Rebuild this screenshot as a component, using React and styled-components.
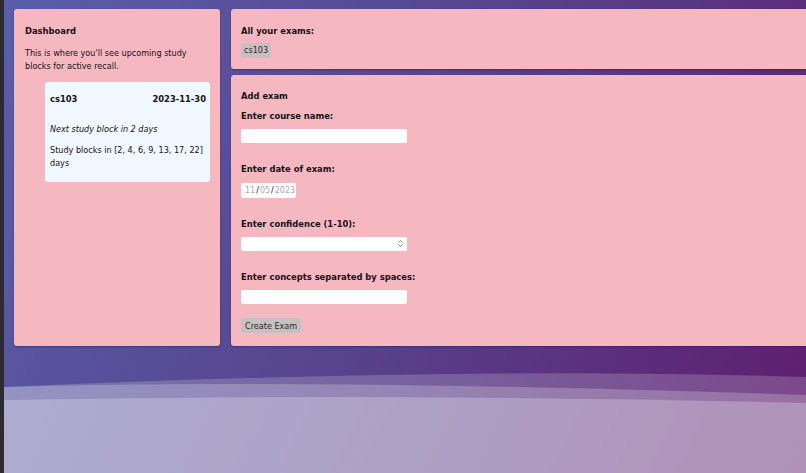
import styled, { createGlobalStyle } from "styled-components";
import { ChevronsUpDown } from "lucide-react";

const GlobalStyle = createGlobalStyle`
  html, body {
    margin: 0;
    padding: 0;
    height: 100%;
    overflow: hidden;
  }
  body {
    font-family: "DejaVu Sans", "Noto Sans", sans-serif;
    font-size: 8.1px;
    color: #161216;
    background: #2c2b31;
  }
`;

const Screen = styled.div`
  display: flex;
  height: 473px;
`;

const Strip = styled.div`
  width: 4px;
  flex-shrink: 0;
  background: #2c2b31;
`;

const Stage = styled.div`
  position: relative;
  flex: 1;
  overflow: hidden;
  background: linear-gradient(115deg, #5a5ea8 0%, #574690 45%, #5e1d6c 100%);
`;

const Waves = styled.svg`
  position: absolute;
  left: 0;
  bottom: 0;
  width: 100%;
  height: 103px;
`;

const Layout = styled.div`
  position: relative;
  display: grid;
  grid-template-columns: 206px 600px;
  gap: 11px;
  padding: 9px 0 0 10px;
  align-items: start;
`;

const Panel = styled.section`
  background: #f5b8c1;
  border-radius: 3px;
  box-shadow: 0 1px 2px rgba(30, 10, 50, 0.35);
  padding: ${(p) => p.$pad || "15px 11px 11px 10px"};
  box-sizing: border-box;
  height: ${(p) => p.$h || "auto"};
`;

const Column = styled.div`
  display: flex;
  flex-direction: column;
  gap: 6px;
`;

const Title = styled.h2`
  margin: 0;
  font-size: 8.4px;
  font-weight: 700;
  line-height: 13px;
`;

const Text = styled.p`
  margin: ${(p) => p.$mt || "0"} 0 0;
  line-height: 13px;
  font-style: ${(p) => (p.$italic ? "italic" : "normal")};
`;

const Card = styled.div`
  margin: 9.5px -1px 0 20px;
  background: #f0f7fe;
  border-radius: 3px;
  padding: 11px 4px 11.5px 5px;
`;

const CardHead = styled.div`
  display: flex;
  justify-content: space-between;
  font-size: 8.4px;
  font-weight: 700;
  line-height: 13px;
`;

const Chip = styled.span`
  display: inline-block;
  margin-top: 5.5px;
  background: #c7bfc2;
  color: #2a2a2a;
  border-radius: 2px;
  padding: 0 3px;
  line-height: 15px;
`;

const Label = styled.label`
  display: block;
  font-size: 8.4px;
  font-weight: 700;
  line-height: 13px;
  margin-top: ${(p) => p.$mt || "20px"};
`;

const Field = styled.div`
  position: relative;
  margin-top: 6.5px;
  width: ${(p) => p.$w || "166px"};
`;

const Input = styled.input`
  display: block;
  width: 100%;
  height: 14px;
  box-sizing: border-box;
  border: none;
  border-radius: 2px;
  background: #fff;
  padding: 0 4px;
  font: inherit;
  outline: none;
`;

const DateBox = styled.div`
  display: flex;
  align-items: center;
  height: 15px;
  width: 55px;
  box-sizing: border-box;
  padding: 0 4px;
  background: #fff;
  border-radius: 2px;
  color: #a9a9a9;
  font-size: 8px;
`;

const Slash = styled.span`
  color: #111;
  margin: 0 1px;
`;

const Spinner = styled.span`
  position: absolute;
  right: 2px;
  top: 2px;
  display: flex;
  color: #666;
`;

const Button = styled.button`
  display: block;
  margin-top: 14px;
  height: 15px;
  padding: 0 4px;
  border: none;
  border-radius: 3px;
  background: #c7c0c2;
  color: #2a2a2a;
  font: inherit;
`;

export default function App() {
  return (
    <>
      <GlobalStyle />
      <Screen>
        <Strip />
        <Stage>
          <Waves viewBox="4 370 802 103" preserveAspectRatio="none">
            <path d="M4 387 Q480 366 806 377 L806 473 L4 473 Z" fill="#fff" fillOpacity="0.19" />
            <path d="M4 387 Q300 378 806 395 L806 473 L4 473 Z" fill="#fff" fillOpacity="0.22" />
            <path d="M4 400 Q400 393 806 403 L806 473 L4 473 Z" fill="#fff" fillOpacity="0.24" />
          </Waves>
          <Layout>
            <Panel $pad="16px 11px 11px 11px" $h="337px">
              <Title>Dashboard</Title>
              <Text $mt="8.5px">
                This is where you'll see upcoming study blocks for active recall.
              </Text>
              <Card>
                <CardHead>
                  <span>cs103</span>
                  <span>2023-11-30</span>
                </CardHead>
                <Text $mt="17px" $italic>
                  Next study block in 2 days
                </Text>
                <Text $mt="8px">Study blocks in [2, 4, 6, 9, 13, 17, 22] days</Text>
              </Card>
            </Panel>
            <Column>
              <Panel $pad="15.5px 10px 11px 10px" $h="60px">
                <Title>All your exams:</Title>
                <Chip>cs103</Chip>
              </Panel>
              <Panel $pad="14.5px 10px 11px 10px" $h="271px">
                <Title>Add exam</Title>
                <Label $mt="7px">Enter course name:</Label>
                <Field>
                  <Input type="text" />
                </Field>
                <Label>Enter date of exam:</Label>
                <Field $w="55px">
                  <DateBox>
                    <span>11</span>
                    <Slash>/</Slash>
                    <span>05</span>
                    <Slash>/</Slash>
                    <span>2023</span>
                  </DateBox>
                </Field>
                <Label>Enter confidence (1-10):</Label>
                <Field>
                  <Input type="text" />
                  <Spinner>
                    <ChevronsUpDown size={9} strokeWidth={2} />
                  </Spinner>
                </Field>
                <Label $mt="19.5px">Enter concepts separated by spaces:</Label>
                <Field>
                  <Input type="text" />
                </Field>
                <Button>Create Exam</Button>
              </Panel>
            </Column>
          </Layout>
        </Stage>
      </Screen>
    </>
  );
}
